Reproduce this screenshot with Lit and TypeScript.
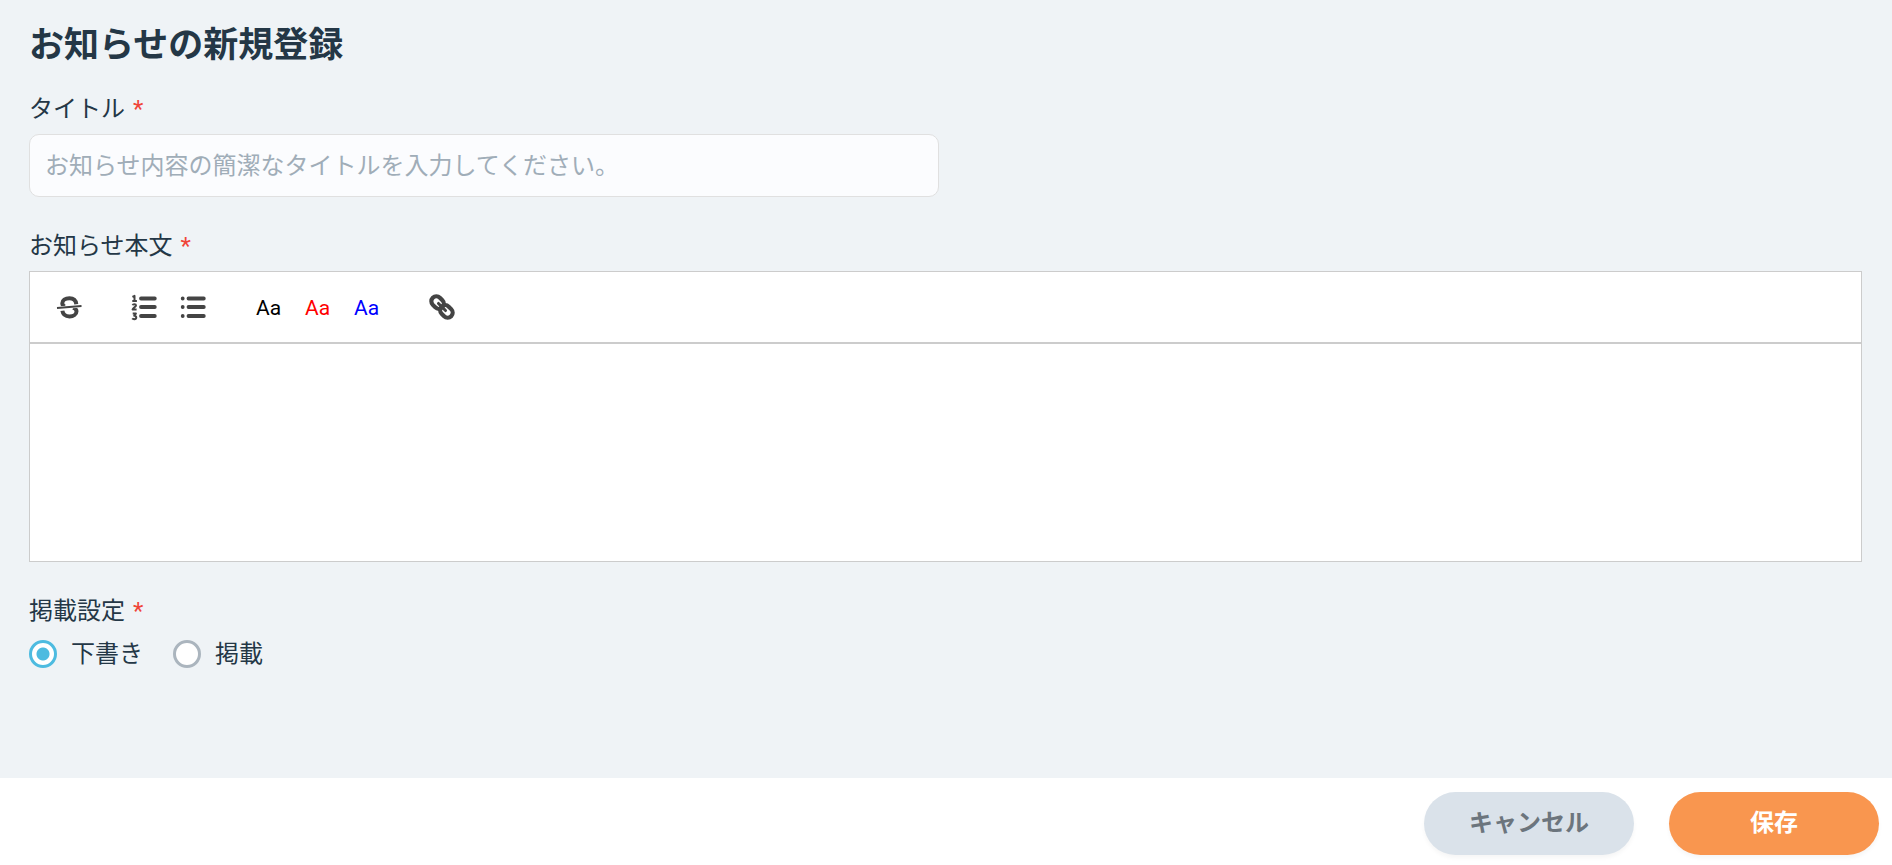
import { LitElement, html, css, svg } from "lit";
import { customElement, state } from "lit/decorators.js";

const strikeIcon = svg`<svg class="icon" viewBox="0 0 32 32" aria-hidden="true">
  <path class="bold" d="M22.300 13.200C21.900 9.400 19.400 7.200 15.400 7.200c-4.200 0-7.100 2.200-7.100 5 0 1.600 1 2.700 2.600 3.300M19 16.900c2.200.6 3.500 1.600 3.500 3.300 0 3-3 5.200-7 5.200-4 0-6.600-2-7.100-5.600"/>
  <path class="gap" d="M3 17L28 15"/>
  <path class="thin" d="M3 17L27.500 15"/>
</svg>`;

const orderedIcon = svg`<svg class="icon" viewBox="0 0 32 32" aria-hidden="true">
  <path class="stroke" d="M12 7.500h13.800M12 16h13.800M12 25h13.800"/>
  <path class="digit" d="M3.400 5.800L5.500 4.900V9.800M3.300 9.900h4.600M3.600 14.200c.4-1.200 3.400-1.300 3.400.2 0 1.300-3 2.400-3.400 4.100h4M3.700 22.600h3.200L5.200 24.700c2.900-.2 2.600 3.600 0 3.500-.9 0-1.500-.2-2-.8"/>
</svg>`;

const bulletIcon = svg`<svg class="icon" viewBox="0 0 32 32" aria-hidden="true">
  <path class="stroke" d="M10.500 7.500h15.300M10.500 16h15.300M10.500 25h15.300"/>
  <path class="stroke" d="M4.700 7.500h.01M4.700 16h.01M4.700 25h.01"/>
</svg>`;

const linkIcon = svg`<svg class="icon" viewBox="0 0 32 32" aria-hidden="true">
  <g class="chain" transform="rotate(45 16 16)">
    <rect x="3" y="11" width="13.500" height="10" rx="5"/>
    <rect x="15.500" y="11" width="13.500" height="10" rx="5"/>
    <path class="core" d="M11 16h10"/>
  </g>
</svg>`;

@customElement("app-root")
export class AppRoot extends LitElement {
  @state() private status = "draft";

  static styles = css`
    :host {
      display: flex;
      flex-direction: column;
      min-height: 100vh;
      background: #eff3f6;
      color: #243746;
      font-family: Roboto, "Noto Sans CJK JP", sans-serif;
      font-size: 24px;
      line-height: 36px;
    }
    * { box-sizing: border-box; }
    button, input { font: inherit; color: inherit; margin: 0; }
    main { flex: 1; padding: 20px 30px 20px 29px; }
    h1 { margin: 0 0 19px; font-size: 35px; line-height: 52px; font-weight: 700; }
    .field { margin-bottom: 31px; }
    .label { display: block; margin-bottom: 7px; }
    .required { margin-left: 2px; color: #f04438; }
    .columns { display: grid; grid-template-columns: 1fr 1fr; gap: 14px; }
    .text-input {
      display: block;
      width: 100%;
      height: 63px;
      padding: 0 15px;
      border: 1px solid #e0e0e0;
      border-radius: 10px;
      background: #fbfcfe;
    }
    .text-input::placeholder { color: #a0adb8; opacity: 1; }
    .toolbar {
      display: flex;
      gap: 26px;
      padding: 14px 15px;
      border: 1px solid #ccc;
      background: #fff;
    }
    .group { display: flex; }
    .tool {
      display: flex;
      align-items: center;
      justify-content: center;
      width: 49px;
      height: 42px;
      padding: 0;
      border: 0;
      background: none;
      font-size: 21px;
      cursor: pointer;
    }
    .color { padding-top: 2px; }
    .black { color: #000; }
    .red { color: #f00; }
    .blue { color: #00f; }
    .icon { width: 32px; height: 32px; fill: none; stroke: #444; }
    .stroke { stroke-width: 3.800; stroke-linecap: round; }
    .bold { stroke-width: 4; }
    .gap { stroke: #fff; stroke-width: 3; }
    .thin { stroke-width: 1.900; }
    .digit { stroke-width: 2; stroke-linejoin: round; }
    .chain { stroke-width: 4.200; stroke-linecap: round; }
    .core { stroke-width: 3; }
    .editor {
      min-height: 219px;
      padding: 20px 26px;
      border: 1px solid #ccc;
      background: #fff;
      outline: none;
    }
    fieldset { margin: 0; padding: 0; border: 0; }
    legend { padding: 0; }
    .options { display: flex; gap: 30px; }
    .option { display: flex; align-items: center; gap: 14px; cursor: pointer; }
    .radio {
      appearance: none;
      width: 28px;
      height: 28px;
      border: 3px solid #abb5be;
      border-radius: 50%;
      background: #fff;
    }
    .radio:checked {
      border-color: #4dbbe0;
      background: radial-gradient(circle, #4dbbe0 6px, #fff 7px);
    }
    footer {
      display: flex;
      justify-content: flex-end;
      gap: 35px;
      padding: 14px 13px 10px;
      background: #fff;
    }
    .button {
      width: 210px;
      height: 63px;
      padding: 0 0 2px;
      border: 0;
      border-radius: 32px;
      font-weight: 700;
      box-shadow: 0 3px 4px rgba(0, 0, 0, 0.04);
      cursor: pointer;
    }
    .cancel { background: #dae2ea; color: #6c757d; }
    .save { background: #f9964f; color: #fff; }
  `;

  private option(value: string, text: string) {
    return html`<label class="option">
      <input class="radio" type="radio" name="status" .value=${value}
        .checked=${this.status === value} @change=${() => (this.status = value)} />
      <span>${text}</span>
    </label>`;
  }

  render() {
    return html`
      <main>
        <h1>お知らせの新規登録</h1>
        <div class="field">
          <label class="label" for="title">タイトル <span class="required">*</span></label>
          <div class="columns">
            <input class="text-input" id="title" type="text" required
              placeholder="お知らせ内容の簡潔なタイトルを入力してください。" />
          </div>
        </div>
        <div class="field">
          <span class="label" id="body-label">お知らせ本文 <span class="required">*</span></span>
          <div class="toolbar" role="toolbar" aria-labelledby="body-label">
            <div class="group">
              <button class="tool" type="button" aria-label="取り消し線">${strikeIcon}</button>
            </div>
            <div class="group">
              <button class="tool" type="button" aria-label="番号付きリスト">${orderedIcon}</button>
              <button class="tool" type="button" aria-label="箇条書き">${bulletIcon}</button>
            </div>
            <div class="group">
              <button class="tool color black" type="button">Aa</button>
              <button class="tool color red" type="button">Aa</button>
              <button class="tool color blue" type="button">Aa</button>
            </div>
            <div class="group">
              <button class="tool" type="button" aria-label="リンク">${linkIcon}</button>
            </div>
          </div>
          <div class="editor" contenteditable="true" role="textbox" aria-multiline="true"
            aria-labelledby="body-label"></div>
        </div>
        <fieldset>
          <legend class="label">掲載設定 <span class="required">*</span></legend>
          <div class="options">
            ${this.option("draft", "下書き")} ${this.option("published", "掲載")}
          </div>
        </fieldset>
      </main>
      <footer>
        <button class="button cancel" type="button">キャンセル</button>
        <button class="button save" type="submit">保存</button>
      </footer>
    `;
  }
}
